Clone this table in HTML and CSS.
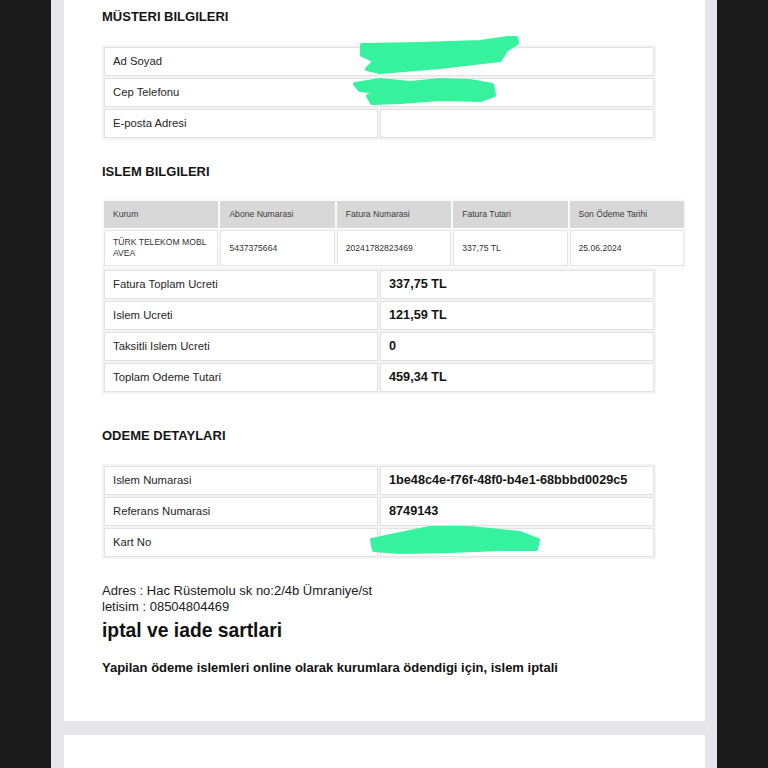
FILE: index.html
```html
<!DOCTYPE html>
<html lang="tr">
<head>
<meta charset="utf-8">
<title>Makbuz</title>
<link rel="stylesheet" href="styles.css">
</head>
<body>
<div class="viewer">
  <div class="page">
    <h2 class="sec-title first">MÜSTERI BILGILERI</h2>
    <table class="kv">
      <tr><td>Ad Soyad</td><td></td></tr>
      <tr><td>Cep Telefonu</td><td></td></tr>
      <tr><td>E-posta Adresi</td><td></td></tr>
    </table>

    <h2 class="sec-title second">ISLEM BILGILERI</h2>
    <table class="grid5">
      <tr class="head"><td>Kurum</td><td>Abone Numarasi</td><td>Fatura Numarasi</td><td>Fatura Tutari</td><td>Son Ödeme Tarihi</td></tr>
      <tr class="data"><td>TÜRK TELEKOM MOBL AVEA</td><td>5437375664</td><td>20241782823469</td><td>337,75 TL</td><td>25.06.2024</td></tr>
    </table>
    <table class="kv totals">
      <tr><td>Fatura Toplam Ucreti</td><td class="val">337,75 TL</td></tr>
      <tr><td>Islem Ucreti</td><td class="val">121,59 TL</td></tr>
      <tr><td>Taksitli Islem Ucreti</td><td class="val">0</td></tr>
      <tr><td>Toplam Odeme Tutari</td><td class="val">459,34 TL</td></tr>
    </table>

    <h2 class="sec-title third">ODEME DETAYLARI</h2>
    <table class="kv">
      <tr><td>Islem Numarasi</td><td class="val">1be48c4e-f76f-48f0-b4e1-68bbbd0029c5</td></tr>
      <tr><td>Referans Numarasi</td><td class="val">8749143</td></tr>
      <tr><td>Kart No</td><td></td></tr>
    </table>

    <p class="addr">Adres : Hac Rüstemolu sk no:2/4b Ümraniye/st<br>letisim : 08504804469</p>
    <h3 class="terms-title">iptal ve iade sartlari</h3>
    <p class="terms">Yapilan ödeme islemleri online olarak kurumlara ödendigi için, islem iptali</p>

    <svg class="redact" viewBox="0 0 641 721" width="641" height="721" aria-hidden="true">
      <g fill="#36f29e" stroke="#36f29e" stroke-width="4" stroke-linejoin="round">
        <polygon points="298,45 356,44 416,42 444,38 452,38 453,43 442,50 436,60 376,67 316,72 303,69 311,61 298,55"/>
        <polygon points="291,84 316,80 346,83 376,80 406,81 428,85 430,95 416,100 376,99 336,102 308,103 304,96 316,92 296,90"/>
        <polygon points="308,540 336,534 366,528 406,528 456,533 474,540 472,549 436,549 386,551 336,552 310,550"/>
      </g>
    </svg>
  </div>
  <div class="page next"></div>
</div>
</body>
</html>
```

FILE: styles.css
```css
html, body {
  margin: 0;
  padding: 0;
  background: #1a1a1a;
  height: 768px;
  overflow: hidden;
}

body {
  font-family: "Liberation Sans", Arial, sans-serif;
  color: #222;
}

.viewer {
  width: 641px;
  margin-left: 51px;
  padding: 0 12px 0 13px;
  background: #e6e6eb;
  display: flex;
  flex-direction: column;
  gap: 14px;
  height: 768px;
  overflow: hidden;
}

.page {
  position: relative;
  background: #fff;
  height: 721px;
  box-sizing: border-box;
  padding: 9px 0 0 38px;
  flex-shrink: 0;
}

.page.next {
  height: 40px;
  padding: 0;
}

.sec-title {
  margin: 0;
  font-size: 13px;
  line-height: 16px;
  font-weight: bold;
  color: #151515;
}

.sec-title.first { margin-bottom: 20px; }
.sec-title.second { margin-top: 24px; margin-bottom: 19px; }
.sec-title.third { margin-top: 34px; margin-bottom: 20px; }

table {
  border-collapse: separate;
  border-spacing: 2px;
  table-layout: fixed;
  background: #f3f3f3;
}

.kv {
  width: 554px;
}

.kv td {
  width: 50%;
  border: 1px solid #e2e2e2;
  background: #fff;
  padding: 0 8px;
  height: 29px;
  box-sizing: border-box;
  line-height: 27px;
  font-size: 11.3px;
  color: #262626;
  white-space: nowrap;
  overflow: hidden;
}

.kv td.val {
  font-weight: bold;
  font-size: 12.7px;
  color: #141414;
}

.grid5 {
  width: 584px;
  background: #fafafa;
}

.grid5 td {
  border: 1px solid #e4e4e4;
  padding: 0 10px 0 8px;
  font-size: 8.6px;
  color: #333;
  box-sizing: border-box;
  vertical-align: middle;
}

.grid5 .head td {
  background: #d8d8d8;
  border-color: #d8d8d8;
  height: 27px;
  line-height: 25px;
  color: #3a3a3a;
}

.grid5 .data td {
  background: #fff;
  height: 36px;
  line-height: 11px;
}

.totals {
  margin-top: 0;
}

.addr {
  margin: 24px 0 0;
  font-size: 13px;
  line-height: 16px;
  color: #202020;
}

.terms-title {
  margin: 5px 0 0;
  font-size: 19.3px;
  line-height: 22px;
  font-weight: bold;
  color: #111;
}

.terms {
  margin: 18px 0 0;
  font-size: 13px;
  line-height: 16px;
  font-weight: bold;
  color: #111;
}

.redact {
  position: absolute;
  left: 0;
  top: 0;
}
```
